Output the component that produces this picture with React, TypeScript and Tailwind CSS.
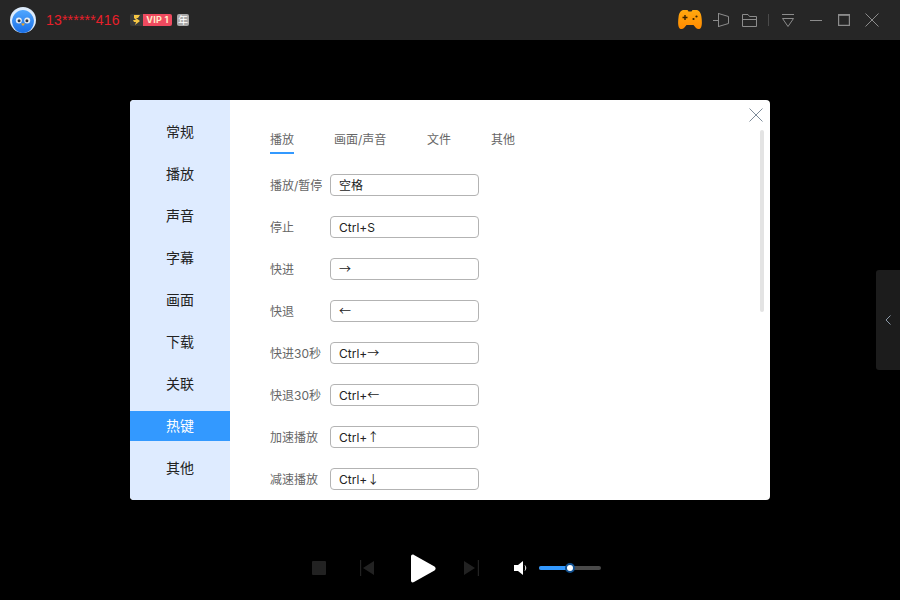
const menu = ['常规', '播放', '声音', '字幕', '画面', '下载', '关联', '热键', '其他'];
const tabs = [
  { label: '播放', className: 'w-[64px]', active: true },
  { label: '画面/声音', className: 'w-[93px]', active: false },
  { label: '文件', className: 'w-[64px]', active: false },
  { label: '其他', className: '', active: false },
];
const hotkeys = [
  ['播放/暂停', '空格'],
  ['停止', 'Ctrl+S'],
  ['快进', '→'],
  ['快退', '←'],
  ['快进30秒', 'Ctrl+→'],
  ['快退30秒', 'Ctrl+←'],
  ['加速播放', 'Ctrl+↑'],
  ['减速播放', 'Ctrl+↓'],
];

// arrows come from the CJK font, Inter's have much heavier heads
const KeyText = ({ value }: { value: string }) => {
  const parts = value.split(/([→←↑↓])/);
  return (
    <>
      {parts.map((part, i) =>
        /[→←↑↓]/.test(part) ? (
          <span key={i} className="font-['Noto_Sans_CJK_SC'] leading-none">{part}</span>
        ) : (
          <span key={i}>{part}</span>
        ),
      )}
    </>
  );
};

const Avatar = () => (
  <svg width="26" height="26" viewBox="0 0 26 26">
    <defs>
      <linearGradient id="bird" x1="0" y1="0" x2="0" y2="1">
        <stop offset="0" stopColor="#4fa6ff" />
        <stop offset="1" stopColor="#1a6fe6" />
      </linearGradient>
    </defs>
    <circle cx="13" cy="13" r="13" fill="#dcebfb" />
    <path d="M13 3c5.500 0 10 4.500 11 10.500C24 20.500 19 26 13 26S2 20.500 2 13.500C3 7.500 7.500 3 13 3z" fill="url(#bird)" />
    <circle cx="8.800" cy="13.500" r="3" fill="#e6edf5" />
    <circle cx="17.200" cy="13.500" r="3" fill="#e6edf5" />
    <circle cx="9.100" cy="13.800" r="1.500" fill="#2b3442" />
    <circle cx="16.900" cy="13.800" r="1.500" fill="#2b3442" />
    <path d="M11 16.500h4l-2 2.500z" fill="#f5a623" />
  </svg>
);

const GameIcon = () => (
  <svg width="24" height="20" viewBox="0 0 24 20">
    <defs>
      <linearGradient id="pad" x1="0" y1="0" x2="0" y2="1">
        <stop offset="0" stopColor="#ffa90f" />
        <stop offset="1" stopColor="#ff8a00" />
      </linearGradient>
    </defs>
    <path d="M6 0h3.500l1 1.500h3l1-1.500H18c3 0 4.800 2.500 5.400 6.500.6 4.500.8 8.500-.4 11-1 2-3.500 2-5 .5L15.500 15h-7L6 18c-1.500 1.500-4 1.500-5-.5-1.200-2.500-1-6.500-.4-11C1.200 2.500 3 0 6 0z" fill="url(#pad)" />
    <path d="M4.500 7.500h5M7 5v5" stroke="#3a2400" strokeWidth="1.400" />
    <circle cx="15.500" cy="9" r="1.100" fill="#3a2400" />
    <circle cx="18.500" cy="6.500" r="1.100" fill="#3a2400" />
  </svg>
);

const WindowIcons = () => (
  <div className="flex items-center text-[#8c8c8c]">
    <svg className="ml-[11px]" width="16" height="14" viewBox="0 0 16 14" fill="none" stroke="currentColor">
      <path d="M0 7.500h5.500M5.500 0v14M5.500 .5l10 3v7l-10 3" />
    </svg>
    <svg className="ml-[13px]" width="15" height="13" viewBox="0 0 15 13" fill="none" stroke="currentColor">
      <path d="M.5 12.500V.5h5.500l1.500 2h7v10zM.5 5.500h14" />
    </svg>
    <div className="ml-[11px] w-px h-[12px] bg-[#4a4a4a]" />
    <svg className="ml-[13px]" width="12" height="13" viewBox="0 0 12 13" fill="none" stroke="currentColor">
      <path d="M0 .5h12M.5 4.500h11L6 12.500z" />
    </svg>
    <svg className="ml-[16px]" width="12" height="12" viewBox="0 0 12 12" fill="none" stroke="currentColor">
      <path d="M0 6.500h12" />
    </svg>
    <svg className="ml-[16px]" width="12" height="12" viewBox="0 0 12 12" fill="none" stroke="currentColor" strokeWidth="1.200">
      <path d="M.6 .6h10.800v10.800H.6z" />
      <path d="M0 1.200h12" />
    </svg>
    <svg className="ml-[15px] mr-[21px]" width="14" height="14" viewBox="0 0 14 14" fill="none" stroke="currentColor">
      <path d="M.5 .5l13 13M13.500 .5l-13 13" />
    </svg>
  </div>
);

const Player = () => (
  <div className="h-[60px] flex items-center pl-[312px] pb-[4px]">
    <div className="w-[14px] h-[14px] bg-[#222] rounded-[1px]" />
    <svg className="ml-[34px]" width="14" height="16" viewBox="0 0 14 16">
      <path d="M0 0h1.200v16H0zM14 1v14L3 8z" fill="#222" />
    </svg>
    <svg className="ml-[36px]" width="26" height="29" viewBox="0 0 26 29">
      <path d="M1 2.500C1 .8 2.500 0 4 1l20.500 11.500c1.500 1 1.500 3 0 4L4 28c-1.500 1-3 .2-3-1.500z" fill="#fff" />
    </svg>
    <svg className="ml-[28px]" width="15" height="16" viewBox="0 0 15 16">
      <path d="M15 0h-1.200v16H15zM0 1v14L11 8z" fill="#222" />
    </svg>
    <svg className="ml-[35px]" width="14" height="14" viewBox="0 0 14 14">
      <path d="M0 4h4l5-4v14l-5-4H0z" fill="#fff" />
      <path d="M11 4.500c1 1.500 1 3.500 0 5" stroke="#fff" fill="none" />
    </svg>
    <div className="ml-[11px] w-[62px] h-[4px] rounded-full bg-[#4a4a4a] relative">
      <div className="w-[31px] h-full rounded-full bg-[#3399ff]" />
      <div className="absolute left-[26px] -top-[3px] w-[10px] h-[10px] rounded-full bg-white border-[2px] border-[#0f4f8f]" />
    </div>
  </div>
);

export default function App() {
  return (
    <div className="w-[900px] h-[600px] bg-black flex flex-col overflow-hidden relative font-['Inter','Noto_Sans_CJK_SC',sans-serif]">
      <header className="h-[40px] bg-[#262626] flex items-center justify-between shrink-0">
        <div className="flex items-center pl-[10px]">
          <Avatar />
          <span className="ml-[10px] w-[74px] font-['Liberation_Sans'] text-[14px] tracking-[0.2px] text-[#e8202a] whitespace-nowrap">13******416</span>
          <span className="ml-[10px] h-[12px] w-[42px] flex rounded-[2px] overflow-hidden">
            <span className="w-[13px] bg-[#3a3a3a] flex items-center justify-center">
              <svg width="7" height="10" viewBox="0 0 7 10" fill="#f5c542">
                <path d="M1 0h6L5 3H3l4 3-5 4 1-3H1L0 5h3L1 3z" />
              </svg>
            </span>
            <span className="flex-1 bg-[#ef4a5f] text-[#ffe9c9] text-[9px] leading-[12px] font-bold tracking-[0.3px] text-center whitespace-nowrap">VIP 1</span>
          </span>
          <span className="ml-[5px] w-[12px] h-[12px] rounded-[2px] bg-[#a8a8a8] text-white text-[10px] leading-[12px] text-center">年</span>
        </div>
        <div className="flex items-center">
          <GameIcon />
          <WindowIcons />
        </div>
      </header>

      <main className="h-[500px] shrink-0 pt-[60px] flex justify-center items-start">
        <div className="w-[640px] h-[400px] bg-white rounded-[4px] overflow-hidden flex relative">
          <nav className="w-[100px] bg-[#deebff] pt-[11px]">
            {menu.map((item) => (
              <div key={item} className="h-[42px] flex items-center">
                <div className={`w-full h-[30px] flex items-center justify-center text-[14px] pb-[2px] ${item === '热键' ? 'bg-[#3399ff] text-white' : 'text-[#222]'}`}>
                  {item}
                </div>
              </div>
            ))}
          </nav>
          <section className="flex-1 pl-[40px] pt-[30px] overflow-hidden">
            <div className="flex h-[24px]">
              {tabs.map((tab) => (
                <div key={tab.label} className={`${tab.className} text-[12px] leading-[20px] text-[#666]`}>
                  <span className={`inline-block h-[24px] ${tab.active ? 'border-b-2 border-[#3399ff]' : ''}`}>{tab.label}</span>
                </div>
              ))}
            </div>
            <div className="mt-[20px] flex flex-col gap-[20px]">
              {hotkeys.map(([name, key]) => (
                <div key={name} className="flex items-center h-[22px]">
                  <span className="w-[60px] pt-[2px] text-[12px] text-[#666] whitespace-nowrap">{name}</span>
                  <div className="w-[149px] h-[22px] border border-[#b3b3b3] rounded-[4px] pl-[8px] text-[12px] leading-[22px] text-[#222] whitespace-nowrap overflow-hidden">
                    <KeyText value={key} />
                  </div>
                </div>
              ))}
            </div>
          </section>
          <div className="w-[4px] h-[182px] bg-[#e3e3e3] rounded-full absolute right-[6px] top-[30px]" />
          <svg className="absolute right-[7px] top-[8px] text-[#7d8b99]" width="14" height="14" viewBox="0 0 14 14" fill="none" stroke="currentColor">
            <path d="M.5 .5l13 13M13.500 .5l-13 13" />
          </svg>
        </div>
      </main>

      <Player />

      <div className="absolute right-0 top-[270px] w-[24px] h-[100px] bg-[#1c1c1c] rounded-l-[3px] flex items-center justify-center">
        <svg width="6" height="10" viewBox="0 0 6 10" fill="none" stroke="#8c9aa8">
          <path d="M5.500 .5L1 5l4.500 4.500" />
        </svg>
      </div>
    </div>
  );
}
